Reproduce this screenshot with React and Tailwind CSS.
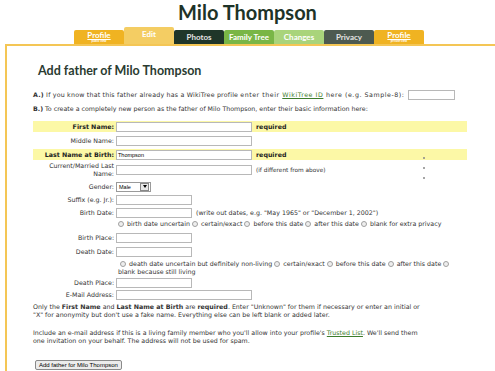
import React from "react";

const tabs = [
  { name: "Profile", sub: "public view", bg: "bg-[#f0b322]", text: "text-white" },
  { name: "Edit", bg: "bg-[#f4cd63]", text: "text-white", active: true },
  { name: "Photos", bg: "bg-[#1f3629]", text: "text-[#e4e4e4]" },
  { name: "Family Tree", bg: "bg-[#79b646]", text: "text-white" },
  { name: "Changes", bg: "bg-[#a9d47b]", text: "text-white" },
  { name: "Privacy", bg: "bg-[#4d5a50]", text: "text-[#e4e4e4]" },
  { name: "Profile", sub: "private view", bg: "bg-[#f0b322]", text: "text-white" },
];

const Radio = () => (
  <span className="inline-block w-[6px] h-[6px] rounded-full border border-[#a0a0a0] bg-[#eeeeee] align-[-1px] mr-[3px]" />
);

const Input = ({ w = "w-[76px]", value = "" }) => (
  <div className={`${w} h-[10px] border border-[#b8b8b8] bg-white flex items-center pl-[1px] text-[5.5px] font-['Liberation_Sans',sans-serif] text-black`}>
    {value}
  </div>
);

const Row = ({ label, bold, yellow, mt, children }) => (
  <div
    className={`flex items-center h-[11px] w-[434px] ${mt} ${yellow ? "bg-[#fcf8a6]" : ""}`}
  >
    <div className={`w-[83px] pr-[2px] text-right ${bold ? "font-bold text-[#222]" : ""}`}>{label}</div>
    {children}
  </div>
);

export default function App() {
  return (
    <div className="w-[495px] h-[371px] overflow-hidden bg-white relative font-['DejaVu_Sans',sans-serif] text-[6.3px] leading-[8px] text-[#333]">
      <h1 className="text-center font-['Lato',sans-serif] font-bold text-[20px] leading-[25px] text-[#1e3328]">
        Milo Thompson
      </h1>

      {/* tabs */}
      <div className="flex items-end ml-[74px] h-[19px]">
        {tabs.map((t, i) => (
          <div
            key={i}
            className={`w-[50px] ${t.active ? "h-[17px] pb-[4px]" : "h-[14px]"} ${t.bg} ${t.text} rounded-t-[2px] flex flex-col items-center justify-center font-['Lato',sans-serif] font-bold text-[8px] leading-[8px]`}
          >
            <span className={t.sub ? "underline leading-[7px]" : ""}>{t.name}</span>
            {t.sub && <span className="text-[3px] leading-[4px]">{t.sub}</span>}
          </div>
        ))}
      </div>

      <div className="ml-[5px] border-l-2 border-t-2 border-[#f4c655] pl-[26px] pt-[16px] h-[330px] relative">
        <h2 className="font-['Lato',sans-serif] font-bold text-[12.5px] leading-[17px] text-[#2a3b31] ml-[5px]">
          Add father of Milo Thompson
        </h2>

        <div className="flex items-center h-[11px] mt-[10px] whitespace-nowrap">
          <span className="tracking-[0.2px]">
            <b>A.)</b> If you know that this father already has a WikiTree profile{" "}
          </span>
          <span className="tracking-[0.55px] ml-[2px]">
            enter their <span className="text-[#3d7d2c] underline">WikiTree ID</span> here (e.g. Sample-8):
          </span>
          <div className="ml-[3px]">
            <Input w="w-[47px]" />
          </div>
        </div>

        <p className="mt-[5px]">
          <b>B.)</b> To create a completely new person as the father of Milo Thompson, enter their basic information here:
        </p>

        <Row label="First Name:" bold yellow mt="mt-[8px]">
          <Input w="w-[136px]" />
          <span className="font-bold text-[#222] ml-[4px]">required</span>
        </Row>
        <Row label="Middle Name:" mt="mt-[3px]">
          <Input w="w-[136px]" />
        </Row>
        <Row label="Last Name at Birth:" bold yellow mt="mt-[3px]">
          <Input w="w-[136px]" value="Thompson" />
          <span className="font-bold text-[#222] ml-[4px]">required</span>
        </Row>
        <div className="flex items-center h-[16px] mt-[2px]">
          <div className="w-[83px] pr-[2px] text-right">Current/Married Last Name:</div>
          <Input w="w-[136px]" />
          <span className="ml-[4px] text-[5.8px]">(if different from above)</span>
        </div>
        <Row label="Gender:" mt="mt-[3px]">
          <div className="w-[35px] h-[10px] border border-[#9a9a9a] bg-white flex items-center text-[5.5px] font-['Liberation_Sans',sans-serif] text-black">
            <span className="flex-1 pl-[2px]">Male</span>
            <span className="w-[9px] h-[8px] mr-[1px] border border-[#888] bg-[#e8e8e8] flex items-center justify-center">
              <span className="w-0 h-0 border-l-[2px] border-r-[2px] border-t-[3px] border-l-transparent border-r-transparent border-t-black" />
            </span>
          </div>
        </Row>
        <Row label="Suffix (e.g. Jr.):" mt="mt-[2px]">
          <Input />
        </Row>
        <Row label="Birth Date:" mt="mt-[2px]">
          <Input />
          <span className="ml-[4px]">(write out dates, e.g. "May 1965" or "December 1, 2002")</span>
        </Row>
        <div className="ml-[85px] h-[10px] mt-[1px] flex items-center whitespace-nowrap">
          <Radio />birth date uncertain&nbsp;<Radio />certain/exact&nbsp;<Radio />before this date&nbsp;<Radio />after this date&nbsp;<Radio />blank for extra privacy
        </div>
        <Row label="Birth Place:" mt="mt-[3px]">
          <Input />
        </Row>
        <Row label="Death Date:" mt="mt-[3px]">
          <Input />
        </Row>
        <p className="ml-[85px] mt-[3px] whitespace-nowrap">
          &nbsp;<Radio />death date uncertain but definitely non-living&nbsp;<Radio />certain/exact&nbsp;<Radio />before this date&nbsp;<Radio />after this date&nbsp;<Radio />
          <br />
          blank because still living
        </p>
        <Row label="Death Place:" mt="mt-[1px]">
          <Input />
        </Row>
        <Row label="E-Mail Address:" mt="mt-[1px]">
          <Input w="w-[136px]" />
        </Row>

        <p className="mt-[3px] whitespace-nowrap">
          Only the <b>First Name</b> and <b>Last Name at Birth</b> are <b>required</b>. Enter "Unknown" for them if necessary or enter an initial or
          <br />
          "X" for anonymity but don't use a fake name. Everything else can be left blank or added later.
        </p>
        <p className="mt-[10px] whitespace-nowrap">
          Include an e-mail address if this is a living family member who you'll allow into your profile's{" "}
          <span className="text-[#3d7d2c] underline">Trusted List</span>. We'll send them
          <br />
          one invitation on your behalf. The address will not be used for spam.
        </p>

        <button className="mt-[15px] ml-[2px] h-[10px] px-[3px] border border-[#8a8a8a] rounded-[2px] bg-[#ececec] text-[6px] leading-[8px] font-['Liberation_Sans',sans-serif] text-black">
          Add father for Milo Thompson
        </button>

        <span className="absolute left-[416px] top-[111px] w-[2px] h-[2px] rounded-full bg-[#888]" />
        <span className="absolute left-[416px] top-[121px] w-[2px] h-[2px] rounded-full bg-[#888]" />
        <span className="absolute left-[416px] top-[131px] w-[2px] h-[2px] rounded-full bg-[#888]" />
      </div>
    </div>
  );
}
